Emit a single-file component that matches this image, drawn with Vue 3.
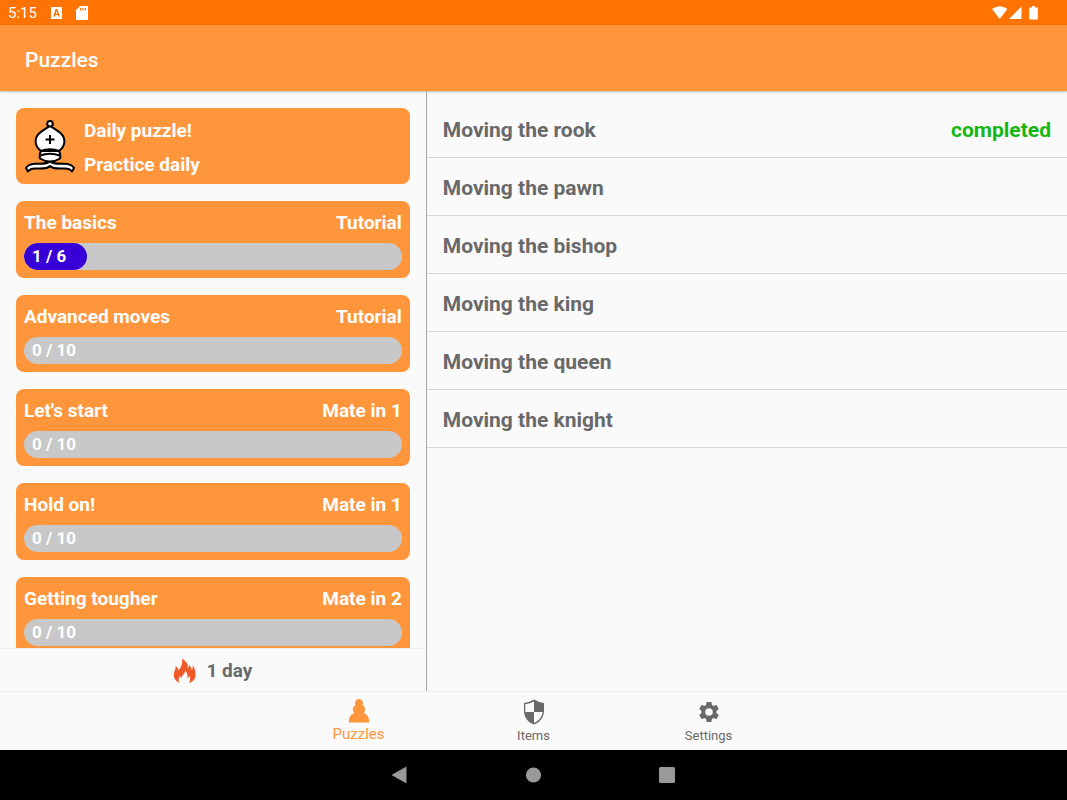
<script setup>
import { ref } from 'vue'

const packs = [
  { title: 'The basics', kind: 'Tutorial', done: 1, total: 6 },
  { title: 'Advanced moves', kind: 'Tutorial', done: 0, total: 10 },
  { title: "Let's start", kind: 'Mate in 1', done: 0, total: 10 },
  { title: 'Hold on!', kind: 'Mate in 1', done: 0, total: 10 },
  { title: 'Getting tougher', kind: 'Mate in 2', done: 0, total: 10 },
]

const lessons = [
  { name: 'Moving the rook', completed: true },
  { name: 'Moving the pawn', completed: false },
  { name: 'Moving the bishop', completed: false },
  { name: 'Moving the king', completed: false },
  { name: 'Moving the queen', completed: false },
  { name: 'Moving the knight', completed: false },
]

const tab = ref('Puzzles')
</script>

<template>
  <div class="app">
    <div class="status">
      <span class="clock">5:15</span>
      <svg class="status-icon" viewBox="0 0 11 12" width="11" height="12" aria-hidden="true">
        <path fill="#fff" fill-rule="evenodd" d="M0 0h11v12H0zM4.600 2 2.200 9.400h1.700l.400-1.500h2.400l.400 1.500h1.700L6.400 2zM5.500 4l.800 2.700H4.700z" />
      </svg>
      <svg class="status-icon" viewBox="0 0 12 14" width="12" height="14" aria-hidden="true">
        <path fill="#fff" fill-rule="evenodd" d="M4 0h7q1 0 1 1v12q0 1-1 1H1q-1 0-1-1V4zM4 2v2.400h1.200V2zM6.400 2v2.400h1.200V2zM8.800 2v2.400H10V2z" />
      </svg>
      <svg class="status-right" viewBox="0 0 46 14" width="46" height="14" aria-hidden="true">
        <path fill="#fff" d="M0 3Q7.700-2.600 15.400 3L7.700 13zM17 13 29.500.500V13zM38 1.500h2V0h3v1.500h2q.800 0 .800.800v10.400q0 .800-.800.800h-7q-.800 0-.800-.800V2.300q0-.800.800-.800z" />
      </svg>
    </div>

    <header class="bar">
      <h1>Puzzles</h1>
    </header>

    <main class="panes">
      <section class="left">
        <div class="packs">
          <button class="card daily">
            <svg viewBox="0 0 50 54" width="50" height="54" aria-hidden="true">
              <g fill="#fff" stroke="#000" stroke-width="2" stroke-linejoin="round">
                <path d="M25 46C22 49.500 16 48.500 10 48.500 6 48.500 4.500 49.500 3 51.500L1 48C3 44.500 7 43.800 11 43.800 17 43.800 22 44.500 25 41 28 44.500 33 43.800 39 43.800 43 43.800 47 44.500 49 48L47 51.500C45.500 49.500 44 48.500 40 48.500 34 48.500 28 49.500 25 46z" />
                <path d="M16 31C14.500 33.500 14.500 36.500 15 38.500 21 42.500 29 42.500 35 38.500 35.500 36.500 35.500 33.500 34 31z" />
                <path d="M16 31C10 26.500 8.500 19 14 13.500 18 10 21.500 8.500 25 5.500 28.500 8.500 32 10 36 13.500 41.500 19 40 26.500 34 31 29 28.500 21 28.500 16 31z" />
                <circle cx="25" cy="3.800" r="2.800" />
                <path fill="none" d="M15.500 35.500C21 33 29 33 34.500 35.500M25 15v9M20.500 19.500h9" />
              </g>
            </svg>
            <span class="daily-text">
              <span>Daily puzzle!</span>
              <span>Practice daily</span>
            </span>
          </button>

          <button v-for="p in packs" :key="p.title" class="card">
            <span class="card-head">
              <span>{{ p.title }}</span>
              <span>{{ p.kind }}</span>
            </span>
            <span class="track">
              <span class="fill" :style="{ width: (p.done / p.total) * 100 + '%' }"></span>
              <span class="count">{{ p.done }} / {{ p.total }}</span>
            </span>
          </button>
        </div>

        <div class="streak">
          <svg viewBox="0 0 24 26" width="23" height="26" aria-hidden="true">
            <path fill="#f05a28" d="M6.500 25.500C2.500 23.500.500 20 .800 16.500 1 13 3 11.500 2.800 8 4.500 9 5.500 10.500 5.700 12.500 7.500 10 10.500 6.500 9.500.300 13.500 2.500 16 6 15.500 10.500 16.500 9.500 16.800 8 16.500 6.500 18.500 8 19.500 10 19.300 12.300 20.300 11.700 20.800 9 20.500 7 23 10 23.500 14 23.500 17.500 23.500 21 21 24.500 16.500 25.500 18.500 22.500 18 20 17.300 18 16.800 19.300 16 20 15 20.300 15.500 17 14.500 14.500 12.800 12.800 12.500 16 9.500 17 9 20.300 8 19.800 7.500 19 7.300 18 5.800 20.500 5.500 23 6.500 25.500z" />
          </svg>
          <span>1 day</span>
        </div>
      </section>

      <ul class="lessons">
        <li v-for="l in lessons" :key="l.name">
          <button class="lesson">
            <span>{{ l.name }}</span>
            <span v-if="l.completed" class="completed">completed</span>
          </button>
        </li>
      </ul>
    </main>

    <nav class="tabs">
      <button class="tab" :class="{ active: tab === 'Puzzles' }" @click="tab = 'Puzzles'">
        <svg viewBox="0 0 24 26" width="24" height="26" aria-hidden="true">
          <path fill="currentColor" d="M2 25.500C1.500 20.500 3.500 17.500 7.200 16 5 13.500 5.500 9.800 8.500 8A4 4 0 1 1 15.500 8C18.500 9.800 19 13.500 16.800 16 20.500 17.500 22.500 20.500 22 25.500z" />
        </svg>
        <span>Puzzles</span>
      </button>
      <button class="tab" :class="{ active: tab === 'Items' }" @click="tab = 'Items'">
        <svg viewBox="0 0 24 26" width="24" height="26" aria-hidden="true">
          <path fill="currentColor" fill-rule="evenodd" d="M12 .500Q17 3.500 22 4v8C22 18 18 23.500 12 25.500 6 23.500 2 18 2 12V4Q7 3.500 12 .500zM12 2.500Q8 4.800 3.300 5.300V13H12zM12 13v11C16.500 22 20 18 20.600 13z" />
        </svg>
        <span>Items</span>
      </button>
      <button class="tab" :class="{ active: tab === 'Settings' }" @click="tab = 'Settings'">
        <svg viewBox="0 0 24 24" width="24" height="26" aria-hidden="true">
          <path fill="currentColor" d="M19.430 12.980c.040-.320.070-.640.070-.980s-.030-.660-.070-.980l2.110-1.650c.190-.150.240-.420.120-.640l-2-3.460c-.120-.220-.390-.300-.610-.220l-2.490 1c-.520-.400-1.080-.730-1.690-.980l-.380-2.650C14.460 2.180 14.250 2 14 2h-4c-.250 0-.460.180-.490.420l-.380 2.650c-.610.250-1.170.590-1.690.980l-2.490-1c-.230-.090-.490 0-.610.220l-2 3.460c-.130.220-.070.490.120.640l2.110 1.650c-.040.320-.070.650-.070.980s.030.660.070.980l-2.110 1.650c-.190.150-.240.420-.120.640l2 3.460c.120.220.390.300.610.220l2.490-1c.520.400 1.080.730 1.690.980l.380 2.650c.030.240.240.420.490.420h4c.250 0 .460-.180.490-.420l.380-2.650c.610-.250 1.170-.590 1.690-.980l2.490 1c.230.090.490 0 .610-.220l2-3.460c.120-.220.070-.490-.120-.640l-2.110-1.650zM12 15.800a3.800 3.800 0 1 1 0-7.600 3.800 3.800 0 0 1 0 7.600z" />
        </svg>
        <span>Settings</span>
      </button>
    </nav>

    <div class="system">
      <button aria-label="Back">
        <svg viewBox="0 0 18 18" width="18" height="18"><path fill="#999" d="M.500 9 15.500.500v17z" /></svg>
      </button>
      <button aria-label="Home">
        <svg viewBox="0 0 18 18" width="18" height="18"><circle fill="#999" cx="8.500" cy="9" r="7.600" /></svg>
      </button>
      <button aria-label="Recent apps">
        <svg viewBox="0 0 18 18" width="18" height="18"><rect fill="#999" x="0" y="1" width="16" height="16" rx="1.500" /></svg>
      </button>
    </div>
  </div>
</template>

<style>
body {
  margin: 0;
  background: #fafafa;
}
</style>

<style scoped>
.app {
  display: flex;
  flex-direction: column;
  height: 100vh;
  background: #fafafa;
  color: #696969;
  font-family: Roboto, "Liberation Sans", sans-serif;
}
button {
  margin: 0;
  padding: 0;
  border: 0;
  background: none;
  color: inherit;
  font: inherit;
  text-align: left;
  cursor: pointer;
}
svg {
  display: block;
  flex: none;
}
.status {
  display: flex;
  align-items: center;
  flex: none;
  gap: 14px;
  height: 25px;
  padding: 0 29px 0 8px;
  background: #ff7300;
  color: #fff;
}
.clock {
  font-size: 15px;
  line-height: 24px;
}
.status-right {
  margin-left: auto;
}
.bar {
  display: flex;
  align-items: center;
  flex: none;
  height: 66px;
  padding: 0 25px;
  background: #ff963c;
  color: #fff;
  box-shadow: 0 1px 2px rgba(0, 0, 0, 0.25);
}
.bar h1 {
  margin: 0;
  padding-top: 3px;
  font-size: 21px;
  line-height: 28px;
  font-weight: 500;
}
.panes {
  display: grid;
  grid-template-columns: 2fr 3fr;
  flex: 1;
  min-height: 0;
}
.left {
  display: flex;
  flex-direction: column;
  min-height: 0;
  border-right: 1px solid #aaa;
}
.packs {
  display: flex;
  flex-direction: column;
  gap: 17px;
  flex: 1;
  min-height: 0;
  padding: 17px 16px 0;
  overflow-y: auto;
  scrollbar-width: none;
}
.card {
  display: flex;
  flex-direction: column;
  flex: none;
  gap: 7px;
  padding: 8px;
  border-radius: 8px;
  background: #ff963c;
  color: #fff;
  font-size: 19px;
  line-height: 27px;
  font-weight: 700;
}
.daily {
  flex-direction: row;
  align-items: center;
  gap: 9px;
  padding: 6px 9px 5px;
}
.daily-text {
  display: flex;
  flex-direction: column;
  gap: 7px;
  padding: 3px 0 1px;
}
.card-head {
  display: flex;
  justify-content: space-between;
}
.track {
  display: grid;
  overflow: hidden;
  border-radius: 14px;
  background: #c8c8c8;
  font-size: 17px;
}
.fill,
.count {
  grid-area: 1 / 1;
}
.fill {
  border-radius: 14px;
  background: #3700d6;
}
.count {
  padding-left: 8px;
}
.streak {
  display: flex;
  align-items: center;
  justify-content: center;
  flex: none;
  gap: 10px;
  height: 40px;
  padding-top: 2px;
  border-top: 1px solid #eee;
  font-size: 19px;
  line-height: 26px;
  font-weight: 700;
}
.lessons {
  margin: 0;
  padding: 9px 0 0;
  list-style: none;
}
.lesson {
  display: flex;
  justify-content: space-between;
  width: 100%;
  padding: 16px 16px 13px;
  border-bottom: 1px solid #d8d8d8;
  font-size: 21px;
  line-height: 28px;
  font-weight: 700;
}
.completed {
  color: #14b814;
}
.tabs {
  display: flex;
  justify-content: center;
  flex: none;
  height: 58px;
  border-top: 1px solid #f0f0f0;
}
.tab {
  display: flex;
  flex-direction: column;
  align-items: center;
  gap: 2px;
  width: 175px;
  padding-top: 7px;
  font-size: 13px;
  line-height: 18px;
}
.active {
  padding-top: 5px;
  color: #ff963c;
  font-size: 15px;
}
.system {
  display: flex;
  align-items: center;
  justify-content: center;
  flex: none;
  gap: 116px;
  height: 50px;
  background: #000;
}
</style>
